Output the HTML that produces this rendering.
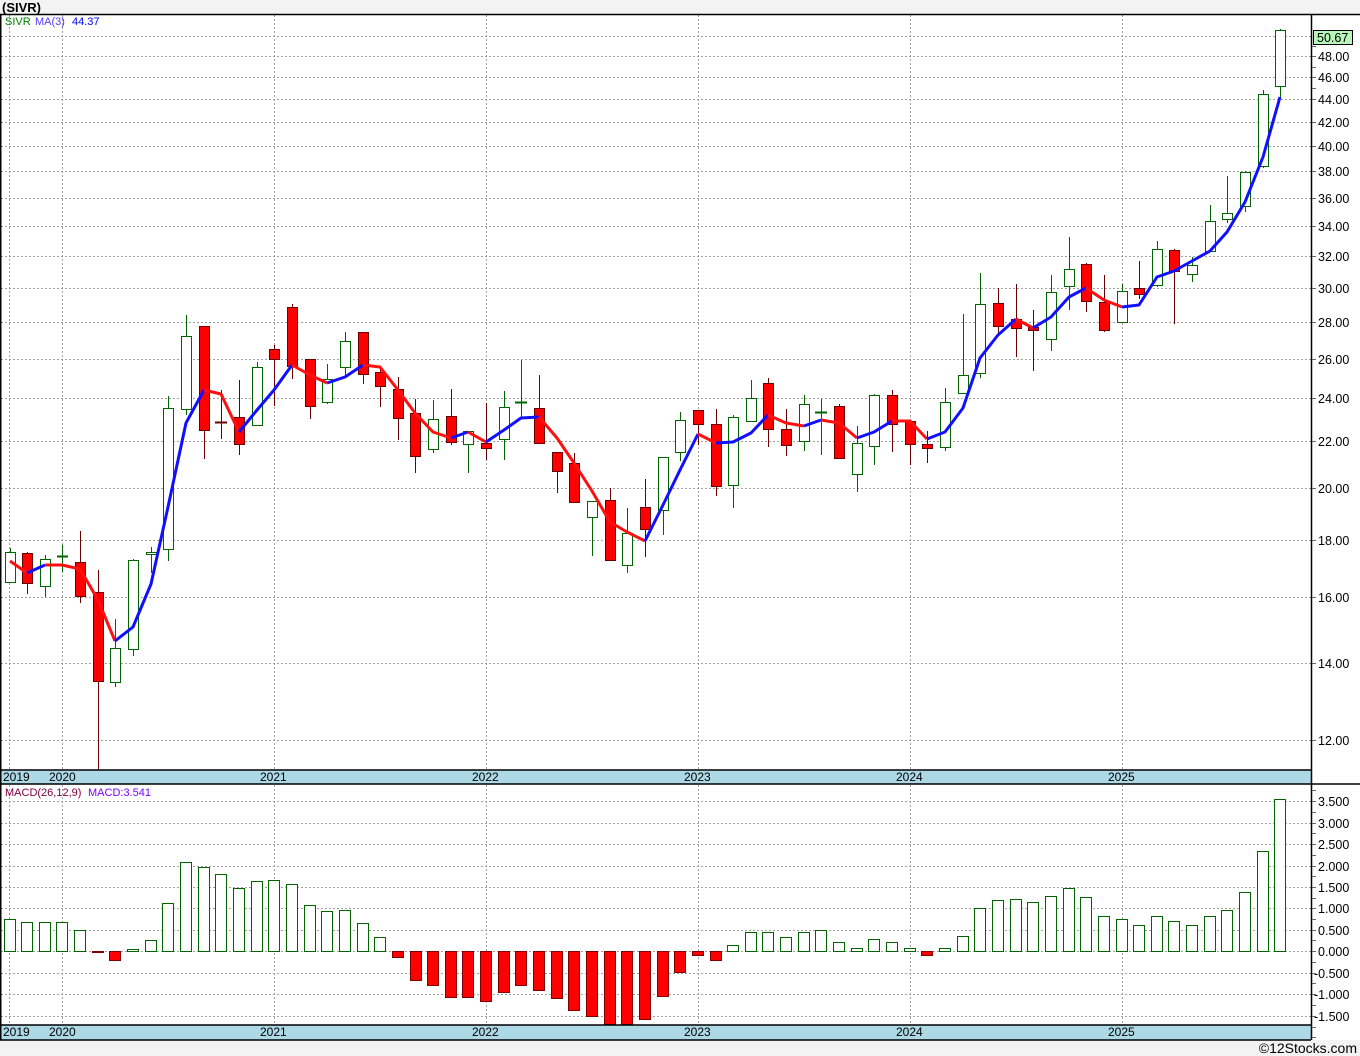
<!DOCTYPE html>
<html><head><meta charset="utf-8"><style>
html,body{margin:0;padding:0;background:#f3f3f3;}
svg{display:block;font-family:"Liberation Sans",sans-serif;}
</style></head><body>
<svg width="1360" height="1056" xmlns="http://www.w3.org/2000/svg">
<rect x="0" y="0" width="1360" height="1056" fill="#f3f3f3"/>
<rect x="0" y="14" width="1360" height="1026" fill="#fff"/>
<text x="2" y="12" font-size="13" font-weight="bold" fill="#000">(SIVR)</text>
<g stroke="#a0a0a0" stroke-dasharray="2,2" stroke-width="1">
<line x1="1" y1="36.5" x2="1311" y2="36.5"/><line x1="1" y1="56.5" x2="1311" y2="56.5"/><line x1="1" y1="77.5" x2="1311" y2="77.5"/><line x1="1" y1="99.5" x2="1311" y2="99.5"/><line x1="1" y1="122.5" x2="1311" y2="122.5"/><line x1="1" y1="146.5" x2="1311" y2="146.5"/><line x1="1" y1="171.5" x2="1311" y2="171.5"/><line x1="1" y1="198.5" x2="1311" y2="198.5"/><line x1="1" y1="226.5" x2="1311" y2="226.5"/><line x1="1" y1="256.5" x2="1311" y2="256.5"/><line x1="1" y1="288.5" x2="1311" y2="288.5"/><line x1="1" y1="322.5" x2="1311" y2="322.5"/><line x1="1" y1="359.5" x2="1311" y2="359.5"/><line x1="1" y1="398.5" x2="1311" y2="398.5"/><line x1="1" y1="441.5" x2="1311" y2="441.5"/><line x1="1" y1="488.5" x2="1311" y2="488.5"/><line x1="1" y1="540.5" x2="1311" y2="540.5"/><line x1="1" y1="597.5" x2="1311" y2="597.5"/><line x1="1" y1="663.5" x2="1311" y2="663.5"/><line x1="1" y1="740.5" x2="1311" y2="740.5"/>
<line x1="9.5" y1="15" x2="9.5" y2="770"/><line x1="62.5" y1="15" x2="62.5" y2="770"/><line x1="274.5" y1="15" x2="274.5" y2="770"/><line x1="486.5" y1="15" x2="486.5" y2="770"/><line x1="698.5" y1="15" x2="698.5" y2="770"/><line x1="910.5" y1="15" x2="910.5" y2="770"/><line x1="1122.5" y1="15" x2="1122.5" y2="770"/>
<line x1="1" y1="801.5" x2="1311" y2="801.5"/><line x1="1" y1="823.5" x2="1311" y2="823.5"/><line x1="1" y1="844.5" x2="1311" y2="844.5"/><line x1="1" y1="866.5" x2="1311" y2="866.5"/><line x1="1" y1="887.5" x2="1311" y2="887.5"/><line x1="1" y1="908.5" x2="1311" y2="908.5"/><line x1="1" y1="930.5" x2="1311" y2="930.5"/><line x1="1" y1="951.5" x2="1311" y2="951.5"/><line x1="1" y1="973.5" x2="1311" y2="973.5"/><line x1="1" y1="994.5" x2="1311" y2="994.5"/><line x1="1" y1="1016.5" x2="1311" y2="1016.5"/>
<line x1="9.5" y1="785" x2="9.5" y2="1025"/><line x1="62.5" y1="785" x2="62.5" y2="1025"/><line x1="274.5" y1="785" x2="274.5" y2="1025"/><line x1="486.5" y1="785" x2="486.5" y2="1025"/><line x1="698.5" y1="785" x2="698.5" y2="1025"/><line x1="910.5" y1="785" x2="910.5" y2="1025"/><line x1="1122.5" y1="785" x2="1122.5" y2="1025"/>
</g>
<text x="5" y="25" font-size="11" fill="#008000">SIVR</text>
<text x="35" y="25" font-size="11" fill="#5a3cff">MA(3)</text>
<text x="72" y="25" font-size="11" fill="#0000ff">44.37</text>
<g stroke-width="1">
<g stroke="#006400" fill="#fff">
<line x1="10.5" y1="548" x2="10.5" y2="583"/><rect x="5.5" y="552.5" width="10" height="30"/>
<line x1="45.5" y1="555" x2="45.5" y2="597"/><rect x="40.5" y="559.5" width="10" height="27"/>
<line x1="62.5" y1="545" x2="62.5" y2="572"/><line x1="57" y1="556.5" x2="68" y2="556.5" stroke-width="2"/>
<line x1="115.5" y1="619" x2="115.5" y2="687"/><rect x="110.5" y="648.5" width="10" height="34"/>
<line x1="133.5" y1="559" x2="133.5" y2="656"/><rect x="128.5" y="560.5" width="10" height="89"/>
<line x1="151.5" y1="547" x2="151.5" y2="573"/><rect x="146.5" y="552.5" width="10" height="2"/>
<line x1="168.5" y1="396" x2="168.5" y2="561"/><rect x="163.5" y="408.5" width="10" height="141"/>
<line x1="186.5" y1="315" x2="186.5" y2="415"/><rect x="181.5" y="336.5" width="10" height="73"/>
<line x1="257.5" y1="362" x2="257.5" y2="426"/><rect x="252.5" y="367.5" width="10" height="58"/>
<line x1="327.5" y1="364" x2="327.5" y2="404"/><rect x="322.5" y="379.5" width="10" height="23"/>
<line x1="345.5" y1="332" x2="345.5" y2="377"/><rect x="340.5" y="341.5" width="10" height="26"/>
<line x1="433.5" y1="400" x2="433.5" y2="453"/><rect x="428.5" y="419.5" width="10" height="30"/>
<line x1="468.5" y1="431" x2="468.5" y2="473"/><rect x="463.5" y="431.5" width="10" height="13"/>
<line x1="504.5" y1="391" x2="504.5" y2="460"/><rect x="499.5" y="407.5" width="10" height="32"/>
<line x1="521.5" y1="360" x2="521.5" y2="417"/><line x1="515" y1="402.5" x2="527" y2="402.5" stroke-width="2"/>
<line x1="592.5" y1="501" x2="592.5" y2="556"/><rect x="587.5" y="501.5" width="10" height="16"/>
<line x1="627.5" y1="508" x2="627.5" y2="573"/><rect x="622.5" y="533.5" width="10" height="32"/>
<line x1="663.5" y1="457" x2="663.5" y2="535"/><rect x="658.5" y="457.5" width="10" height="53"/>
<line x1="680.5" y1="412" x2="680.5" y2="461"/><rect x="675.5" y="420.5" width="10" height="32"/>
<line x1="733.5" y1="415" x2="733.5" y2="508"/><rect x="728.5" y="417.5" width="10" height="68"/>
<line x1="751.5" y1="380" x2="751.5" y2="421"/><rect x="746.5" y="398.5" width="10" height="23"/>
<line x1="804.5" y1="395" x2="804.5" y2="451"/><rect x="799.5" y="404.5" width="10" height="37"/>
<line x1="821.5" y1="399" x2="821.5" y2="455"/><line x1="815" y1="412.5" x2="827" y2="412.5" stroke-width="2"/>
<line x1="857.5" y1="426" x2="857.5" y2="492"/><rect x="852.5" y="443.5" width="10" height="31"/>
<line x1="874.5" y1="394" x2="874.5" y2="465"/><rect x="869.5" y="395.5" width="10" height="51"/>
<line x1="945.5" y1="388" x2="945.5" y2="451"/><rect x="940.5" y="402.5" width="10" height="45"/>
<line x1="963.5" y1="314" x2="963.5" y2="393"/><rect x="958.5" y="375.5" width="10" height="18"/>
<line x1="980.5" y1="273" x2="980.5" y2="378"/><rect x="975.5" y="304.5" width="10" height="69"/>
<line x1="1051.5" y1="275" x2="1051.5" y2="351"/><rect x="1046.5" y="292.5" width="10" height="47"/>
<line x1="1069.5" y1="237" x2="1069.5" y2="310"/><rect x="1064.5" y="269.5" width="10" height="17"/>
<line x1="1122.5" y1="284" x2="1122.5" y2="322"/><rect x="1117.5" y="291.5" width="10" height="31"/>
<line x1="1157.5" y1="241" x2="1157.5" y2="287"/><rect x="1152.5" y="249.5" width="10" height="36"/>
<line x1="1192.5" y1="257" x2="1192.5" y2="282"/><rect x="1187.5" y="265.5" width="10" height="9"/>
<line x1="1210.5" y1="205" x2="1210.5" y2="251"/><rect x="1205.5" y="221.5" width="10" height="30"/>
<line x1="1227.5" y1="176" x2="1227.5" y2="223"/><rect x="1222.5" y="213.5" width="10" height="6"/>
<line x1="1245.5" y1="171" x2="1245.5" y2="212"/><rect x="1240.5" y="172.5" width="10" height="34"/>
<line x1="1263.5" y1="90" x2="1263.5" y2="168"/><rect x="1258.5" y="94.5" width="10" height="72"/>
<line x1="1280.5" y1="29" x2="1280.5" y2="97"/><rect x="1275.5" y="30.5" width="10" height="56"/>
</g>
<g stroke="#6a0000" fill="#ff0000">
<line x1="27.5" y1="552" x2="27.5" y2="594"/><rect x="22.5" y="553.5" width="10" height="30"/>
<line x1="80.5" y1="531" x2="80.5" y2="603"/><rect x="75.5" y="562.5" width="10" height="34"/>
<line x1="98.5" y1="570" x2="98.5" y2="770"/><rect x="93.5" y="592.5" width="10" height="89"/>
<line x1="204.5" y1="326" x2="204.5" y2="459"/><rect x="199.5" y="326.5" width="10" height="104"/>
<line x1="221.5" y1="390" x2="221.5" y2="439"/><line x1="215" y1="422.5" x2="227" y2="422.5" stroke-width="2"/>
<line x1="239.5" y1="380" x2="239.5" y2="455"/><rect x="234.5" y="417.5" width="10" height="27"/>
<line x1="274.5" y1="345" x2="274.5" y2="406"/><rect x="269.5" y="349.5" width="10" height="10"/>
<line x1="292.5" y1="304" x2="292.5" y2="379"/><rect x="287.5" y="307.5" width="10" height="59"/>
<line x1="310.5" y1="359" x2="310.5" y2="419"/><rect x="305.5" y="359.5" width="10" height="47"/>
<line x1="363.5" y1="332" x2="363.5" y2="384"/><rect x="358.5" y="332.5" width="10" height="42"/>
<line x1="380.5" y1="366" x2="380.5" y2="407"/><rect x="375.5" y="372.5" width="10" height="14"/>
<line x1="398.5" y1="377" x2="398.5" y2="440"/><rect x="393.5" y="389.5" width="10" height="29"/>
<line x1="415.5" y1="399" x2="415.5" y2="473"/><rect x="410.5" y="413.5" width="10" height="43"/>
<line x1="451.5" y1="389" x2="451.5" y2="445"/><rect x="446.5" y="416.5" width="10" height="26"/>
<line x1="486.5" y1="403" x2="486.5" y2="460"/><rect x="481.5" y="443.5" width="10" height="5"/>
<line x1="539.5" y1="375" x2="539.5" y2="444"/><rect x="534.5" y="408.5" width="10" height="35"/>
<line x1="557.5" y1="452" x2="557.5" y2="493"/><rect x="552.5" y="452.5" width="10" height="19"/>
<line x1="574.5" y1="453" x2="574.5" y2="502"/><rect x="569.5" y="463.5" width="10" height="39"/>
<line x1="610.5" y1="488" x2="610.5" y2="560"/><rect x="605.5" y="500.5" width="10" height="60"/>
<line x1="645.5" y1="479" x2="645.5" y2="557"/><rect x="640.5" y="507.5" width="10" height="22"/>
<line x1="698.5" y1="410" x2="698.5" y2="445"/><rect x="693.5" y="410.5" width="10" height="14"/>
<line x1="716.5" y1="409" x2="716.5" y2="496"/><rect x="711.5" y="424.5" width="10" height="62"/>
<line x1="768.5" y1="378" x2="768.5" y2="447"/><rect x="763.5" y="383.5" width="10" height="46"/>
<line x1="786.5" y1="409" x2="786.5" y2="456"/><rect x="781.5" y="429.5" width="10" height="16"/>
<line x1="839.5" y1="404" x2="839.5" y2="459"/><rect x="834.5" y="406.5" width="10" height="52"/>
<line x1="892.5" y1="390" x2="892.5" y2="452"/><rect x="887.5" y="395.5" width="10" height="29"/>
<line x1="910.5" y1="421" x2="910.5" y2="465"/><rect x="905.5" y="421.5" width="10" height="23"/>
<line x1="927.5" y1="431" x2="927.5" y2="463"/><rect x="922.5" y="444.5" width="10" height="4"/>
<line x1="998.5" y1="288" x2="998.5" y2="334"/><rect x="993.5" y="303.5" width="10" height="23"/>
<line x1="1016.5" y1="284" x2="1016.5" y2="357"/><rect x="1011.5" y="319.5" width="10" height="9"/>
<line x1="1033.5" y1="310" x2="1033.5" y2="371"/><rect x="1028.5" y="327.5" width="10" height="3"/>
<line x1="1086.5" y1="263" x2="1086.5" y2="312"/><rect x="1081.5" y="264.5" width="10" height="37"/>
<line x1="1104.5" y1="275" x2="1104.5" y2="332"/><rect x="1099.5" y="302.5" width="10" height="28"/>
<line x1="1139.5" y1="261" x2="1139.5" y2="299"/><rect x="1134.5" y="288.5" width="10" height="6"/>
<line x1="1174.5" y1="249" x2="1174.5" y2="324"/><rect x="1169.5" y="250.5" width="10" height="21"/>
</g>
</g>
<g fill="none" stroke-width="3" stroke-linejoin="round">
<polyline stroke="#ff1010" points="10,561 27,573"/>
<polyline stroke="#1010ff" points="27,573 45,565"/>
<polyline stroke="#ff1010" points="45,565 62,565 80,569 98,600 115,641"/>
<polyline stroke="#1010ff" points="115,641 133,627 151,584 168,507 186,423 204,390"/>
<polyline stroke="#ff1010" points="204,390 221,394 239,432"/>
<polyline stroke="#1010ff" points="239,432 257,410 274,390 292,365"/>
<polyline stroke="#ff1010" points="292,365 310,375 327,383"/>
<polyline stroke="#1010ff" points="327,383 345,377 363,365"/>
<polyline stroke="#ff1010" points="363,365 380,367 398,390 415,413 433,432 451,438"/>
<polyline stroke="#1010ff" points="451,438 468,432"/>
<polyline stroke="#ff1010" points="468,432 486,442"/>
<polyline stroke="#1010ff" points="486,442 504,430 521,418 539,417"/>
<polyline stroke="#ff1010" points="539,417 557,438 574,463 592,491 610,522 627,532 645,541"/>
<polyline stroke="#1010ff" points="645,541 663,505 680,470 698,434"/>
<polyline stroke="#ff1010" points="698,434 716,443"/>
<polyline stroke="#1010ff" points="716,443 733,442 751,433 768,415"/>
<polyline stroke="#ff1010" points="768,415 786,423 804,426"/>
<polyline stroke="#1010ff" points="804,426 821,420"/>
<polyline stroke="#ff1010" points="821,420 839,423 857,438"/>
<polyline stroke="#1010ff" points="857,438 874,432 892,421"/>
<polyline stroke="#ff1010" points="892,421 910,421 927,439"/>
<polyline stroke="#1010ff" points="927,439 945,432 963,408 980,358 998,335 1016,319"/>
<polyline stroke="#ff1010" points="1016,319 1033,328"/>
<polyline stroke="#1010ff" points="1033,328 1051,317 1069,297 1086,288"/>
<polyline stroke="#ff1010" points="1086,288 1104,300 1122,307"/>
<polyline stroke="#1010ff" points="1122,307 1139,305 1157,277 1174,271 1192,261 1210,251 1227,232 1245,202 1263,157 1280,97"/>
</g>
<g stroke="#006400" fill="#fff">
<rect x="4.5" y="919.5" width="11" height="32"/><rect x="21.5" y="922.5" width="11" height="29"/><rect x="39.5" y="922.5" width="11" height="29"/><rect x="56.5" y="922.5" width="11" height="29"/><rect x="74.5" y="930.5" width="11" height="21"/>
<rect x="127.5" y="949.5" width="11" height="2"/><rect x="145.5" y="940.5" width="11" height="11"/><rect x="162.5" y="903.5" width="11" height="48"/><rect x="180.5" y="862.5" width="11" height="89"/><rect x="198.5" y="867.5" width="11" height="84"/><rect x="215.5" y="874.5" width="11" height="77"/><rect x="233.5" y="888.5" width="11" height="63"/><rect x="251.5" y="881.5" width="11" height="70"/><rect x="268.5" y="880.5" width="11" height="71"/><rect x="286.5" y="884.5" width="11" height="67"/><rect x="304.5" y="905.5" width="11" height="46"/><rect x="321.5" y="911.5" width="11" height="40"/><rect x="339.5" y="910.5" width="11" height="41"/><rect x="357.5" y="923.5" width="11" height="28"/><rect x="374.5" y="937.5" width="11" height="14"/>
<rect x="727.5" y="945.5" width="11" height="6"/><rect x="745.5" y="932.5" width="11" height="19"/><rect x="762.5" y="932.5" width="11" height="19"/><rect x="780.5" y="937.5" width="11" height="14"/><rect x="798.5" y="932.5" width="11" height="19"/><rect x="815.5" y="930.5" width="11" height="21"/><rect x="833.5" y="942.5" width="11" height="9"/><rect x="851.5" y="948.5" width="11" height="3"/><rect x="868.5" y="939.5" width="11" height="12"/><rect x="886.5" y="942.5" width="11" height="9"/><rect x="904.5" y="948.5" width="11" height="3"/><rect x="939.5" y="948.5" width="11" height="3"/><rect x="957.5" y="936.5" width="11" height="15"/><rect x="974.5" y="908.5" width="11" height="43"/><rect x="992.5" y="900.5" width="11" height="51"/><rect x="1010.5" y="899.5" width="11" height="52"/><rect x="1027.5" y="902.5" width="11" height="49"/><rect x="1045.5" y="896.5" width="11" height="55"/><rect x="1063.5" y="888.5" width="11" height="63"/><rect x="1080.5" y="897.5" width="11" height="54"/><rect x="1098.5" y="916.5" width="11" height="35"/><rect x="1116.5" y="919.5" width="11" height="32"/><rect x="1133.5" y="925.5" width="11" height="26"/><rect x="1151.5" y="916.5" width="11" height="35"/><rect x="1168.5" y="921.5" width="11" height="30"/><rect x="1186.5" y="925.5" width="11" height="26"/><rect x="1204.5" y="916.5" width="11" height="35"/><rect x="1221.5" y="910.5" width="11" height="41"/><rect x="1239.5" y="892.5" width="11" height="59"/><rect x="1257.5" y="851.5" width="11" height="100"/><rect x="1274.5" y="799.5" width="11" height="152"/>
</g>
<g stroke="#800000" fill="#ff0000">
<rect x="92.5" y="951.5" width="11" height="1"/><rect x="109.5" y="951.5" width="11" height="9"/>
<rect x="392.5" y="951.5" width="11" height="6"/><rect x="410.5" y="951.5" width="11" height="29"/><rect x="427.5" y="951.5" width="11" height="34"/><rect x="445.5" y="951.5" width="11" height="46"/><rect x="462.5" y="951.5" width="11" height="46"/><rect x="480.5" y="951.5" width="11" height="50"/><rect x="498.5" y="951.5" width="11" height="41"/><rect x="515.5" y="951.5" width="11" height="34"/><rect x="533.5" y="951.5" width="11" height="39"/><rect x="551.5" y="951.5" width="11" height="47"/><rect x="568.5" y="951.5" width="11" height="59"/><rect x="586.5" y="951.5" width="11" height="65"/><rect x="604.5" y="951.5" width="11" height="73"/><rect x="621.5" y="951.5" width="11" height="73"/><rect x="639.5" y="951.5" width="11" height="68"/><rect x="657.5" y="951.5" width="11" height="45"/><rect x="674.5" y="951.5" width="11" height="21"/><rect x="692.5" y="951.5" width="11" height="4"/><rect x="710.5" y="951.5" width="11" height="9"/><rect x="921.5" y="951.5" width="11" height="4"/>
</g>
<text x="5" y="796" font-size="11" fill="#800040">MACD(26,12,9)</text>
<text x="88" y="796" font-size="11" fill="#8000ff">MACD:3.541</text>
<rect x="0" y="770" width="1311" height="14" fill="#add8e6"/>
<rect x="0" y="1025" width="1311" height="15" fill="#add8e6"/>
<g stroke="#000" stroke-width="1.5" fill="none">
<line x1="0" y1="14.5" x2="1360" y2="14.5"/>
<line x1="0" y1="770" x2="1311" y2="770"/>
<line x1="0" y1="784" x2="1360" y2="784"/>
<line x1="0" y1="1025" x2="1311" y2="1025"/>
<line x1="0" y1="1040" x2="1311" y2="1040"/>
<line x1="0.75" y1="14" x2="0.75" y2="1040"/>
<line x1="1311.5" y1="14" x2="1311.5" y2="1040"/>
</g>
<g font-size="12" fill="#000">
<text x="3" y="781">2019</text><text x="49" y="781">2020</text><text x="260" y="781">2021</text><text x="472" y="781">2022</text><text x="684" y="781">2023</text><text x="896" y="781">2024</text><text x="1108" y="781">2025</text>
<text x="3" y="1036">2019</text><text x="49" y="1036">2020</text><text x="260" y="1036">2021</text><text x="472" y="1036">2022</text><text x="684" y="1036">2023</text><text x="896" y="1036">2024</text><text x="1108" y="1036">2025</text>
</g>
<g stroke="#666" stroke-width="1">
<line x1="1312" y1="46.5" x2="1316" y2="46.5"/><line x1="1312" y1="56.5" x2="1316" y2="56.5"/><line x1="1312" y1="67.5" x2="1316" y2="67.5"/><line x1="1312" y1="77.5" x2="1316" y2="77.5"/><line x1="1312" y1="88.5" x2="1316" y2="88.5"/><line x1="1312" y1="99.5" x2="1316" y2="99.5"/><line x1="1312" y1="122.5" x2="1316" y2="122.5"/><line x1="1312" y1="146.5" x2="1316" y2="146.5"/><line x1="1312" y1="171.5" x2="1316" y2="171.5"/><line x1="1312" y1="198.5" x2="1316" y2="198.5"/><line x1="1312" y1="226.5" x2="1316" y2="226.5"/><line x1="1312" y1="256.5" x2="1316" y2="256.5"/><line x1="1312" y1="288.5" x2="1316" y2="288.5"/><line x1="1312" y1="322.5" x2="1316" y2="322.5"/><line x1="1312" y1="359.5" x2="1316" y2="359.5"/><line x1="1312" y1="398.5" x2="1316" y2="398.5"/><line x1="1312" y1="441.5" x2="1316" y2="441.5"/><line x1="1312" y1="488.5" x2="1316" y2="488.5"/><line x1="1312" y1="540.5" x2="1316" y2="540.5"/><line x1="1312" y1="597.5" x2="1316" y2="597.5"/><line x1="1312" y1="663.5" x2="1316" y2="663.5"/><line x1="1312" y1="740.5" x2="1316" y2="740.5"/>
<line x1="1312" y1="790.5" x2="1316" y2="790.5"/><line x1="1312" y1="801.5" x2="1316" y2="801.5"/><line x1="1312" y1="812.5" x2="1316" y2="812.5"/><line x1="1312" y1="823.5" x2="1316" y2="823.5"/><line x1="1312" y1="833.5" x2="1316" y2="833.5"/><line x1="1312" y1="844.5" x2="1316" y2="844.5"/><line x1="1312" y1="855.5" x2="1316" y2="855.5"/><line x1="1312" y1="866.5" x2="1316" y2="866.5"/><line x1="1312" y1="876.5" x2="1316" y2="876.5"/><line x1="1312" y1="887.5" x2="1316" y2="887.5"/><line x1="1312" y1="898.5" x2="1316" y2="898.5"/><line x1="1312" y1="908.5" x2="1316" y2="908.5"/><line x1="1312" y1="919.5" x2="1316" y2="919.5"/><line x1="1312" y1="930.5" x2="1316" y2="930.5"/><line x1="1312" y1="940.5" x2="1316" y2="940.5"/><line x1="1312" y1="951.5" x2="1316" y2="951.5"/><line x1="1312" y1="962.5" x2="1316" y2="962.5"/><line x1="1312" y1="973.5" x2="1316" y2="973.5"/><line x1="1312" y1="983.5" x2="1316" y2="983.5"/><line x1="1312" y1="994.5" x2="1316" y2="994.5"/><line x1="1312" y1="1005.5" x2="1316" y2="1005.5"/><line x1="1312" y1="1016.5" x2="1316" y2="1016.5"/><line x1="1312" y1="1027.5" x2="1316" y2="1027.5"/><line x1="1312" y1="1037.5" x2="1316" y2="1037.5"/>
</g>
<g font-size="12.5" fill="#000">
<text x="1318" y="61">48.00</text><text x="1318" y="82">46.00</text><text x="1318" y="104">44.00</text><text x="1318" y="127">42.00</text><text x="1318" y="151">40.00</text><text x="1318" y="176">38.00</text><text x="1318" y="203">36.00</text><text x="1318" y="231">34.00</text><text x="1318" y="261">32.00</text><text x="1318" y="293">30.00</text><text x="1318" y="327">28.00</text><text x="1318" y="364">26.00</text><text x="1318" y="403">24.00</text><text x="1318" y="446">22.00</text><text x="1318" y="493">20.00</text><text x="1318" y="545">18.00</text><text x="1318" y="602">16.00</text><text x="1318" y="668">14.00</text><text x="1318" y="745">12.00</text>
<text x="1318" y="806">3.500</text><text x="1318" y="828">3.000</text><text x="1318" y="849">2.500</text><text x="1318" y="871">2.000</text><text x="1318" y="892">1.500</text><text x="1318" y="913">1.000</text><text x="1318" y="935">0.500</text><text x="1318" y="956">0.000</text><text x="1314" y="978">-0.500</text><text x="1314" y="999">-1.000</text><text x="1314" y="1021">-1.500</text>
</g>
<rect x="1313.5" y="30.5" width="39" height="14" fill="#b8f5b8" stroke="#000"/>
<text x="1317" y="42" font-size="12.5" fill="#000">50.67</text>
<text x="1357" y="1053" font-size="14" fill="#000" text-anchor="end">©12Stocks.com</text>
</svg>
</body></html>
